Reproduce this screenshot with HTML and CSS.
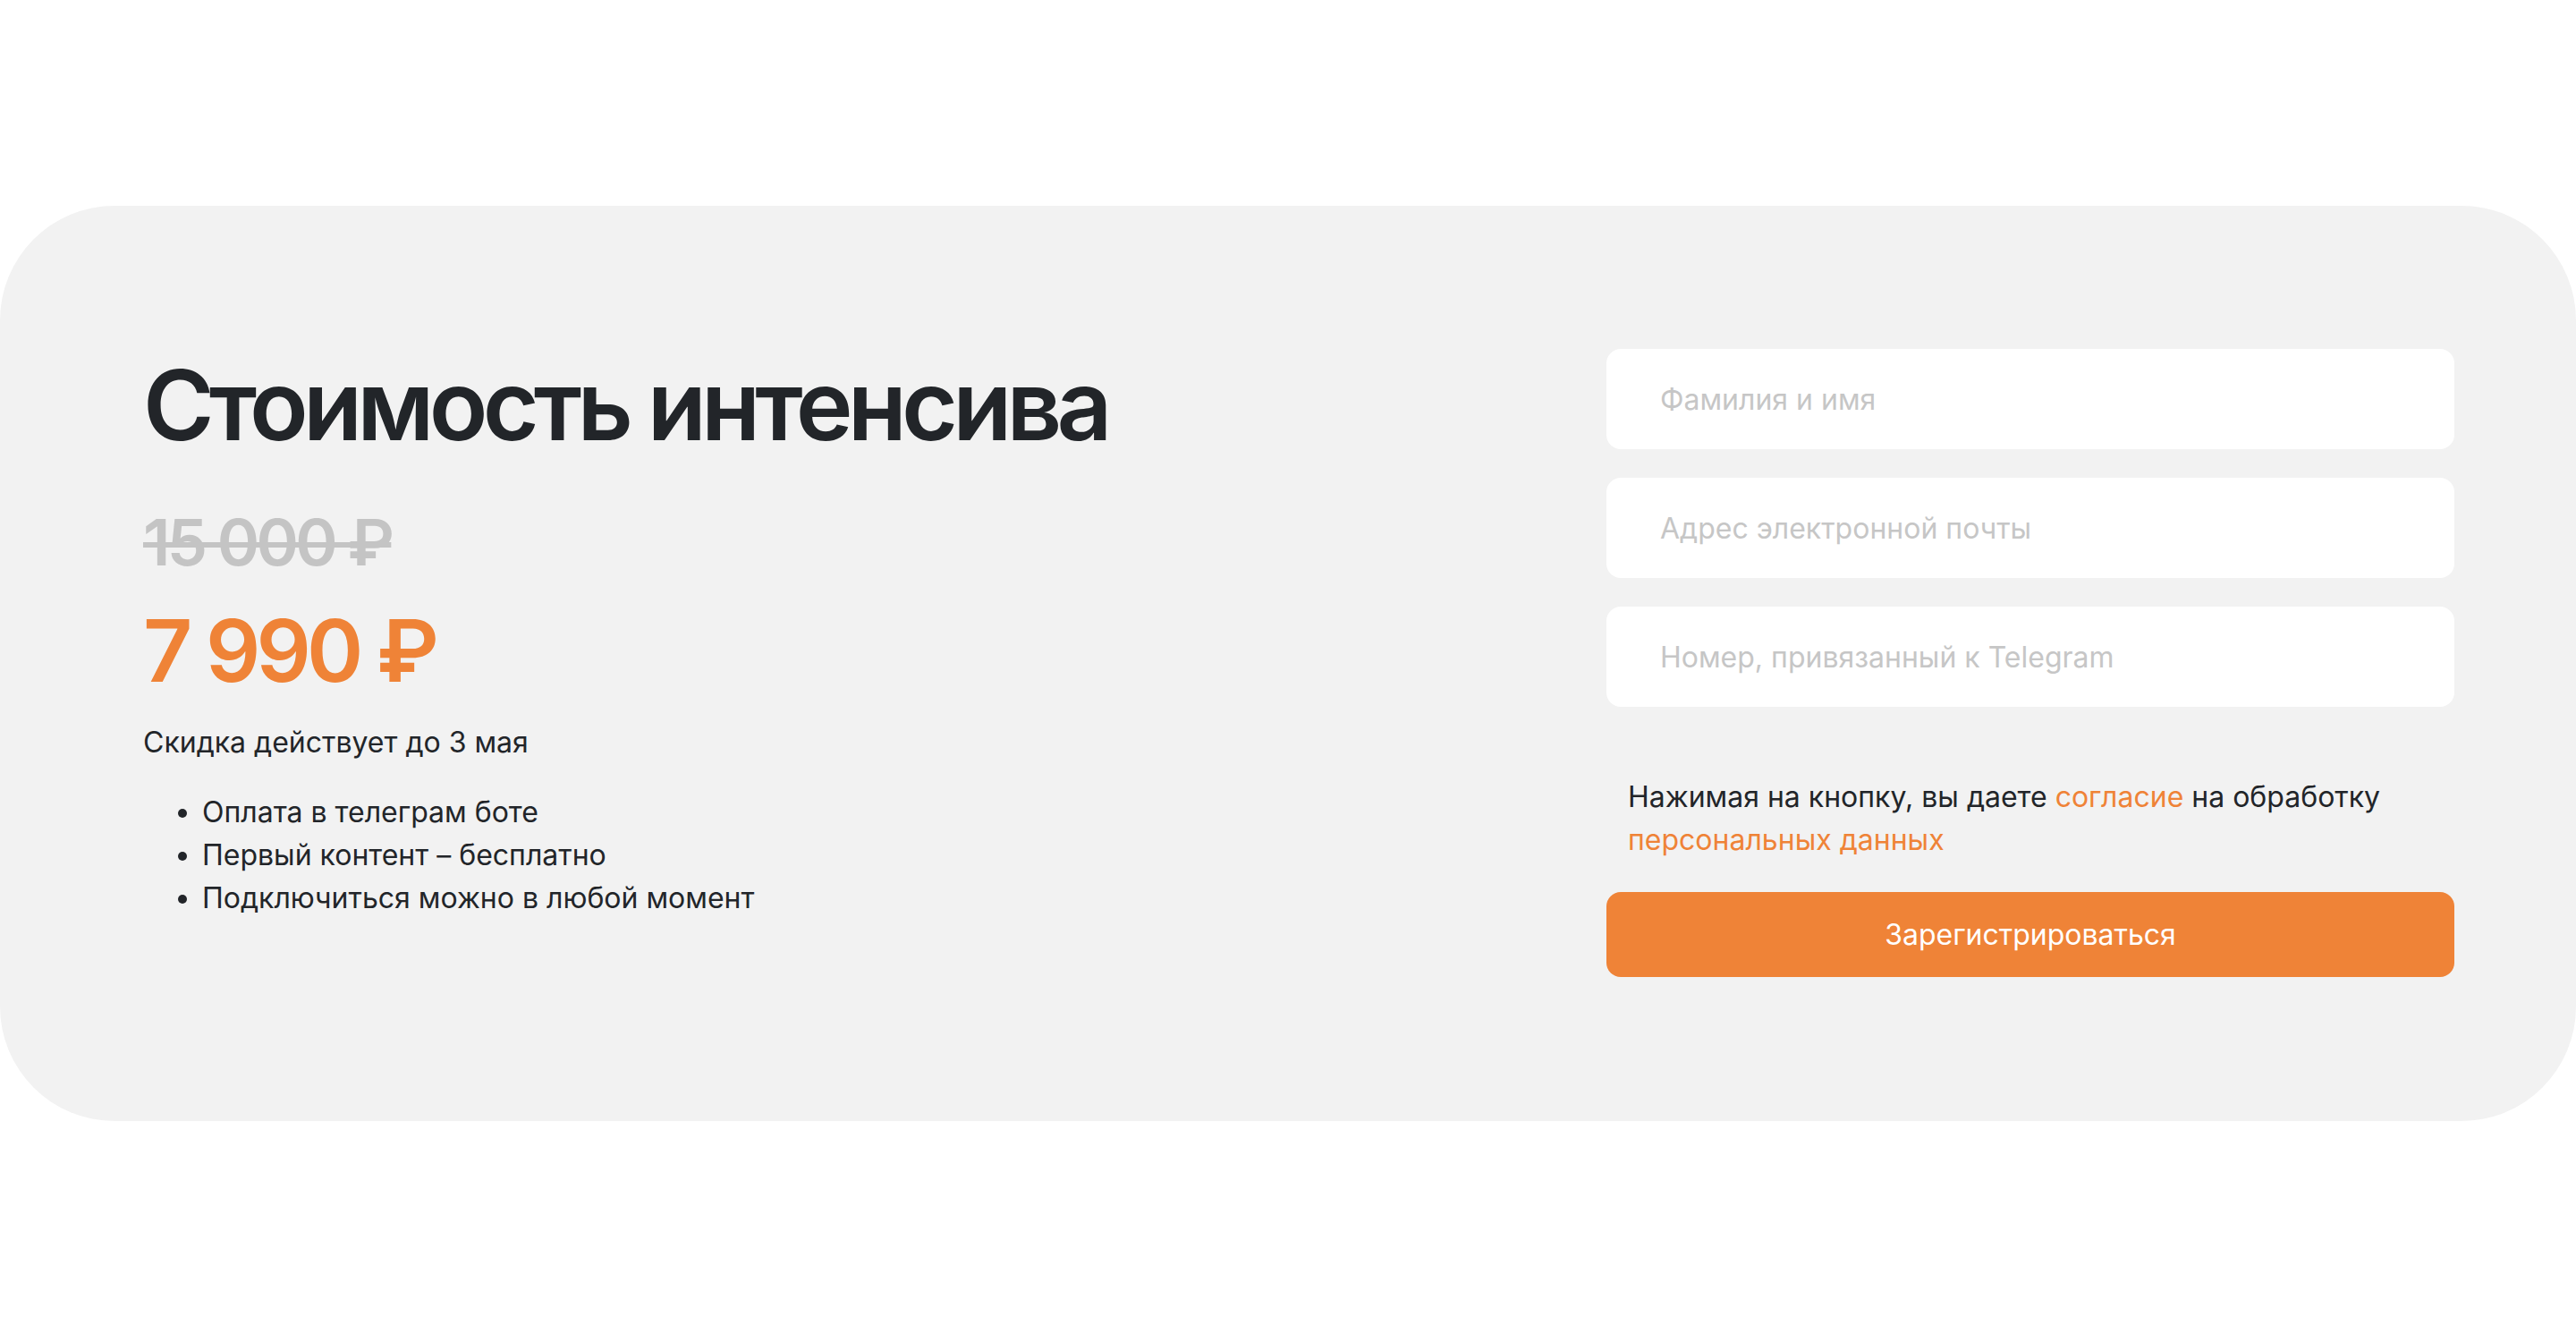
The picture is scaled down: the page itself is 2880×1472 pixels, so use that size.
FILE: index.html
```html
<!DOCTYPE html>
<html lang="ru">
<head>
<meta charset="utf-8">
<title>Стоимость интенсива</title>
<link rel="stylesheet" href="styles.css">
</head>
<body>
<section class="page">
  <div class="card">
    <div class="info">
      <h2 class="title">Стоимость интенсива</h2>
      <div class="old-price">15 000 ₽</div>
      <div class="price">7 990 ₽</div>
      <p class="note">Скидка действует до 3 мая</p>
      <ul class="features">
        <li>Оплата в телеграм боте</li>
        <li>Первый контент – бесплатно</li>
        <li>Подключиться можно в любой момент</li>
      </ul>
    </div>
    <form class="form">
      <input class="field" type="text" placeholder="Фамилия и имя">
      <input class="field" type="email" placeholder="Адрес электронной почты">
      <input class="field" type="tel" placeholder="Номер, привязанный к Telegram">
      <p class="consent">Нажимая на кнопку, вы даете <a href="#" class="link">согласие</a> на обработку<br><a href="#" class="link">персональных данных</a></p>
      <button class="submit" type="button">Зарегистрироваться</button>
    </form>
  </div>
</section>
</body>
</html>
```
FILE: styles.css
```css
* { box-sizing: border-box; }
html, body {
  margin: 0;
  padding: 0;
  background: #ffffff;
}
body {
  font-family: Inter, "Noto Sans", sans-serif;
  color: #222529;
}
.page {
  padding-top: 230px;
  padding-bottom: 219px;
}
.card {
  background: #f2f2f2;
  border-radius: 128px;
  padding: 160px 136px 160px 160px;
  display: flex;
  justify-content: space-between;
  align-items: flex-start;
  height: 1023px;
}
.info {
  padding-top: 3px;
}
.title {
  margin: 0;
  font-size: 108px;
  line-height: 120px;
  font-weight: 600;
  letter-spacing: -5.8px;
  color: #222529;
}
.old-price {
  margin-top: 49px;
  font-size: 72px;
  line-height: 88px;
  font-weight: 600;
  letter-spacing: -3.7px;
  color: #c4c4c4;
  text-decoration: line-through;
  text-decoration-thickness: 6px;
}
.price {
  margin-top: 19px;
  font-size: 96px;
  line-height: 116px;
  font-weight: 600;
  letter-spacing: -4.8px;
  color: #ef8337;
}
.note {
  margin: 21px 0 0;
  font-size: 32px;
  line-height: 48px;
}
.features {
  margin: 30px 0 0;
  padding-left: 66px;
  font-size: 32px;
  line-height: 48px;
}
.form {
  width: 948px;
  display: flex;
  flex-direction: column;
}
.field {
  height: 112px;
  border: none;
  border-radius: 16px;
  background: #ffffff;
  padding: 0 60px;
  font-family: Inter, "Noto Sans", sans-serif;
  font-size: 32px;
  color: #222529;
  outline: none;
  margin-bottom: 32px;
}
.field::placeholder {
  color: #c6c6c6;
}
.field:last-of-type {
  margin-bottom: 0;
}
.consent {
  margin: 77px 0 0;
  padding: 0 24px;
  font-size: 32px;
  line-height: 48px;
  color: #222529;
}
.link {
  color: #ef8337;
  text-decoration: none;
}
.submit {
  margin-top: 34px;
  height: 95px;
  border: none;
  border-radius: 16px;
  background: #ef8337;
  color: #ffffff;
  font-family: Inter, "Noto Sans", sans-serif;
  font-size: 32px;
  cursor: pointer;
}
```
